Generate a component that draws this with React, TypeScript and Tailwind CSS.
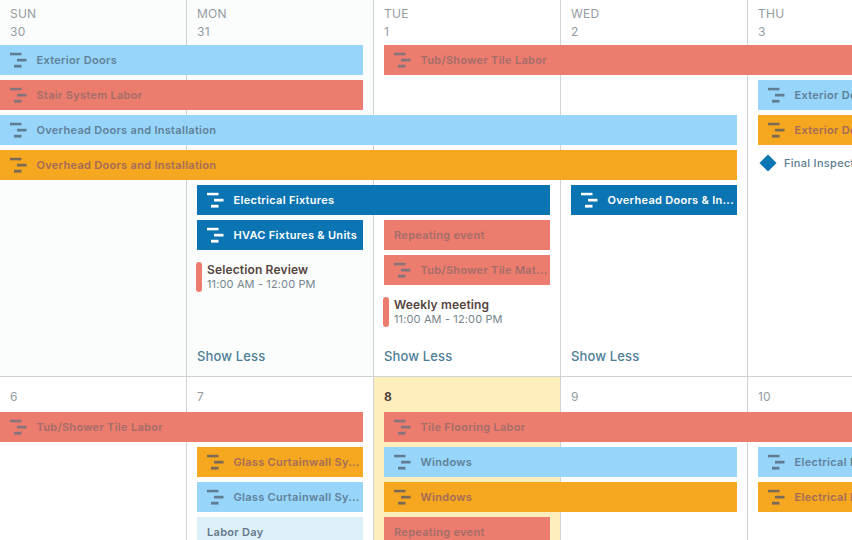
/**
 * Scheduler month view: two weeks of day cells with spanning event bars.
 */

type Tone = 'sky' | 'salmon' | 'amber' | 'blue' | 'pale';

const BAR_TONES: Record<Tone, string> = {
  sky: 'bg-[#97d5fb] text-[#5f8199]',
  salmon: 'bg-[#ec7c6e] text-[#a36e69]',
  amber: 'bg-[#f4a71f] text-[#a56b5a]',
  blue: 'bg-[#0b74b2] text-white',
  pale: 'bg-[#ddeff8] text-[#66798a]',
};

const ICON_TONES: Record<Tone, string> = {
  sky: 'text-[#5f7c90]',
  salmon: 'text-[#85757a]',
  amber: 'text-[#7b6a55]',
  blue: 'text-white',
  pale: 'text-[#66798a]',
};

/* grid helpers spelled out so Tailwind can see them */
const COL_START = ['col-start-1', 'col-start-2', 'col-start-3', 'col-start-4', 'col-start-5'];
const COL_SPAN = ['', 'col-span-1', 'col-span-2', 'col-span-3', 'col-span-4', 'col-span-5'];
const ROW_START = ['', 'row-start-1', 'row-start-2', 'row-start-3', 'row-start-4', 'row-start-5', 'row-start-6', 'row-start-7', 'row-start-8', 'row-start-9', 'row-start-10'];

function GanttIcon({ tone }: { tone: Tone }) {
  return (
    <svg width="17" height="16" viewBox="0 0 17 16" className={`shrink-0 ${ICON_TONES[tone]}`}>
      <rect x="0" y="0.8" width="11.5" height="2.5" fill="currentColor" />
      <rect x="7" y="6.8" width="9.5" height="2.7" fill="currentColor" />
      <rect x="4" y="12.8" width="7.5" height="2.8" fill="currentColor" />
    </svg>
  );
}

type BarProps = {
  col: number;
  span: number;
  row: number;
  tone: Tone;
  label: string;
  icon?: boolean;
  clippedLeft?: boolean;
  clippedRight?: boolean;
};

function Bar({ col, span, row, tone, label, icon = true, clippedLeft, clippedRight }: BarProps) {
  return (
    <div
      className={`${COL_START[col]} ${COL_SPAN[span]} ${ROW_START[row]} z-10 flex h-[30px] items-center overflow-hidden whitespace-nowrap text-[11px] font-semibold tracking-[0.027em] ${BAR_TONES[tone]} ${
        clippedLeft ? 'pl-[10px]' : 'ml-[10px] pl-[10px]'
      } ${clippedRight ? '' : 'mr-[11px]'}`}
    >
      {icon && <GanttIcon tone={tone} />}
      <span className={icon ? 'ml-[9.5px]' : ''}>{label}</span>
    </div>
  );
}

function Appointment({ col, row, title, time }: { col: number; row: number; title: string; time: string }) {
  return (
    <div className={`${COL_START[col]} ${ROW_START[row]} z-10 ml-[9px] mt-[7px] flex h-[30px] gap-[5px]`}>
      <div className="h-[30px] w-[6px] rounded-[3px] bg-[#ec7c6e]" />
      <div className="flex flex-col">
        <span className="text-[12px] leading-[15px] font-semibold tracking-[0.012em] text-[#54443e]">{title}</span>
        <span className="text-[11px] leading-[15px] tracking-[0.012em] text-[#76858d]">{time}</span>
      </div>
    </div>
  );
}

function ShowLess({ col }: { col: number }) {
  return (
    <div className={`${COL_START[col]} row-start-10 z-10 pl-[10px] pt-[23px] text-[13px] leading-[16px] font-medium tracking-[0.01em] text-[#4d7d96]`}>
      Show Less
    </div>
  );
}

/** Background cell of a day; sits in the same grid as the bars, behind them. */
function DayCell({ col, tint }: { col: number; tint: string }) {
  return <div className={`${COL_START[col]} row-start-1 -row-end-1 border-r border-[#cfd3d3] ${tint}`} />;
}

function HeaderLabel({ col, lines, bold }: { col: number; lines: string[]; bold?: boolean }) {
  return (
    <div
      className={`${COL_START[col]} row-start-1 z-10 pl-[10px] text-[12px] leading-[18px] tracking-[0.02em] ${
        bold ? 'font-bold text-[#54443e]' : 'text-[#949c9f]'
      } ${lines.length > 1 ? 'pt-[5px]' : 'pt-[11px]'}`}
    >
      {lines.map((line) => (
        <div key={line}>{line}</div>
      ))}
    </div>
  );
}

export default function App() {
  return (
    <div className="h-[540px] w-[852px] overflow-hidden bg-white font-['Inter',sans-serif]">
      {/* ── Week 1 ── */}
      <div className="grid h-[377px] w-[935px] grid-cols-[repeat(5,187px)] grid-rows-[45px_repeat(8,35px)_1fr] border-b border-[#cfd3d3]">
        <DayCell col={0} tint="bg-[#fbfdfd]" />
        <DayCell col={1} tint="bg-[#fbfdfd]" />
        <DayCell col={2} tint="" />
        <DayCell col={3} tint="" />
        <DayCell col={4} tint="" />

        <HeaderLabel col={0} lines={['SUN', '30']} />
        <HeaderLabel col={1} lines={['MON', '31']} />
        <HeaderLabel col={2} lines={['TUE', '1']} />
        <HeaderLabel col={3} lines={['WED', '2']} />
        <HeaderLabel col={4} lines={['THU', '3']} />

        <Bar col={0} span={2} row={2} tone="sky" label="Exterior Doors" clippedLeft />
        <Bar col={2} span={3} row={2} tone="salmon" label="Tub/Shower Tile Labor" clippedRight />
        <Bar col={0} span={2} row={3} tone="salmon" label="Stair System Labor" clippedLeft />
        <Bar col={4} span={1} row={3} tone="sky" label="Exterior Doors" clippedRight />
        <Bar col={0} span={4} row={4} tone="sky" label="Overhead Doors and Installation" clippedLeft />
        <Bar col={4} span={1} row={4} tone="amber" label="Exterior Doors" clippedRight />
        <Bar col={0} span={4} row={5} tone="amber" label="Overhead Doors and Installation" clippedLeft />
        <div className="col-start-5 row-start-5 z-10 ml-[14px] flex h-[26px] items-center gap-[10px] whitespace-nowrap text-[11px] font-medium tracking-[0.027em] text-[#5b7c90]">
          <div className="h-[12px] w-[12px] rotate-45 bg-[#0b74b2]" />
          Final Inspection
        </div>
        <Bar col={1} span={2} row={6} tone="blue" label="Electrical Fixtures" />
        <Bar col={3} span={1} row={6} tone="blue" label="Overhead Doors & In..." />
        <Bar col={1} span={1} row={7} tone="blue" label="HVAC Fixtures & Units" />
        <Bar col={2} span={1} row={7} tone="salmon" label="Repeating event" icon={false} />
        <Bar col={2} span={1} row={8} tone="salmon" label="Tub/Shower Tile Mat..." />
        <Appointment col={1} row={8} title="Selection Review" time="11:00 AM - 12:00 PM" />
        <Appointment col={2} row={9} title="Weekly meeting" time="11:00 AM - 12:00 PM" />

        <ShowLess col={1} />
        <ShowLess col={2} />
        <ShowLess col={3} />
      </div>

      {/* ── Week 2 ── */}
      <div className="grid h-[163px] w-[935px] grid-cols-[repeat(5,187px)] grid-rows-[35px_repeat(4,35px)]">
        <DayCell col={0} tint="" />
        <DayCell col={1} tint="" />
        <DayCell col={2} tint="bg-[#fdeebc]" />
        <DayCell col={3} tint="" />
        <DayCell col={4} tint="" />

        <HeaderLabel col={0} lines={['6']} />
        <HeaderLabel col={1} lines={['7']} />
        <HeaderLabel col={2} lines={['8']} bold />
        <HeaderLabel col={3} lines={['9']} />
        <HeaderLabel col={4} lines={['10']} />

        <Bar col={0} span={2} row={2} tone="salmon" label="Tub/Shower Tile Labor" clippedLeft />
        <Bar col={2} span={3} row={2} tone="salmon" label="Tile Flooring Labor" clippedRight />
        <Bar col={1} span={1} row={3} tone="amber" label="Glass Curtainwall Sy..." />
        <Bar col={2} span={2} row={3} tone="sky" label="Windows" />
        <Bar col={4} span={1} row={3} tone="sky" label="Electrical Fixtures" clippedRight />
        <Bar col={1} span={1} row={4} tone="sky" label="Glass Curtainwall Sy..." />
        <Bar col={2} span={2} row={4} tone="amber" label="Windows" />
        <Bar col={4} span={1} row={4} tone="amber" label="Electrical Fixtures" clippedRight />
        <Bar col={1} span={1} row={5} tone="pale" label="Labor Day" icon={false} />
        <Bar col={2} span={1} row={5} tone="salmon" label="Repeating event" icon={false} />
      </div>
    </div>
  );
}
